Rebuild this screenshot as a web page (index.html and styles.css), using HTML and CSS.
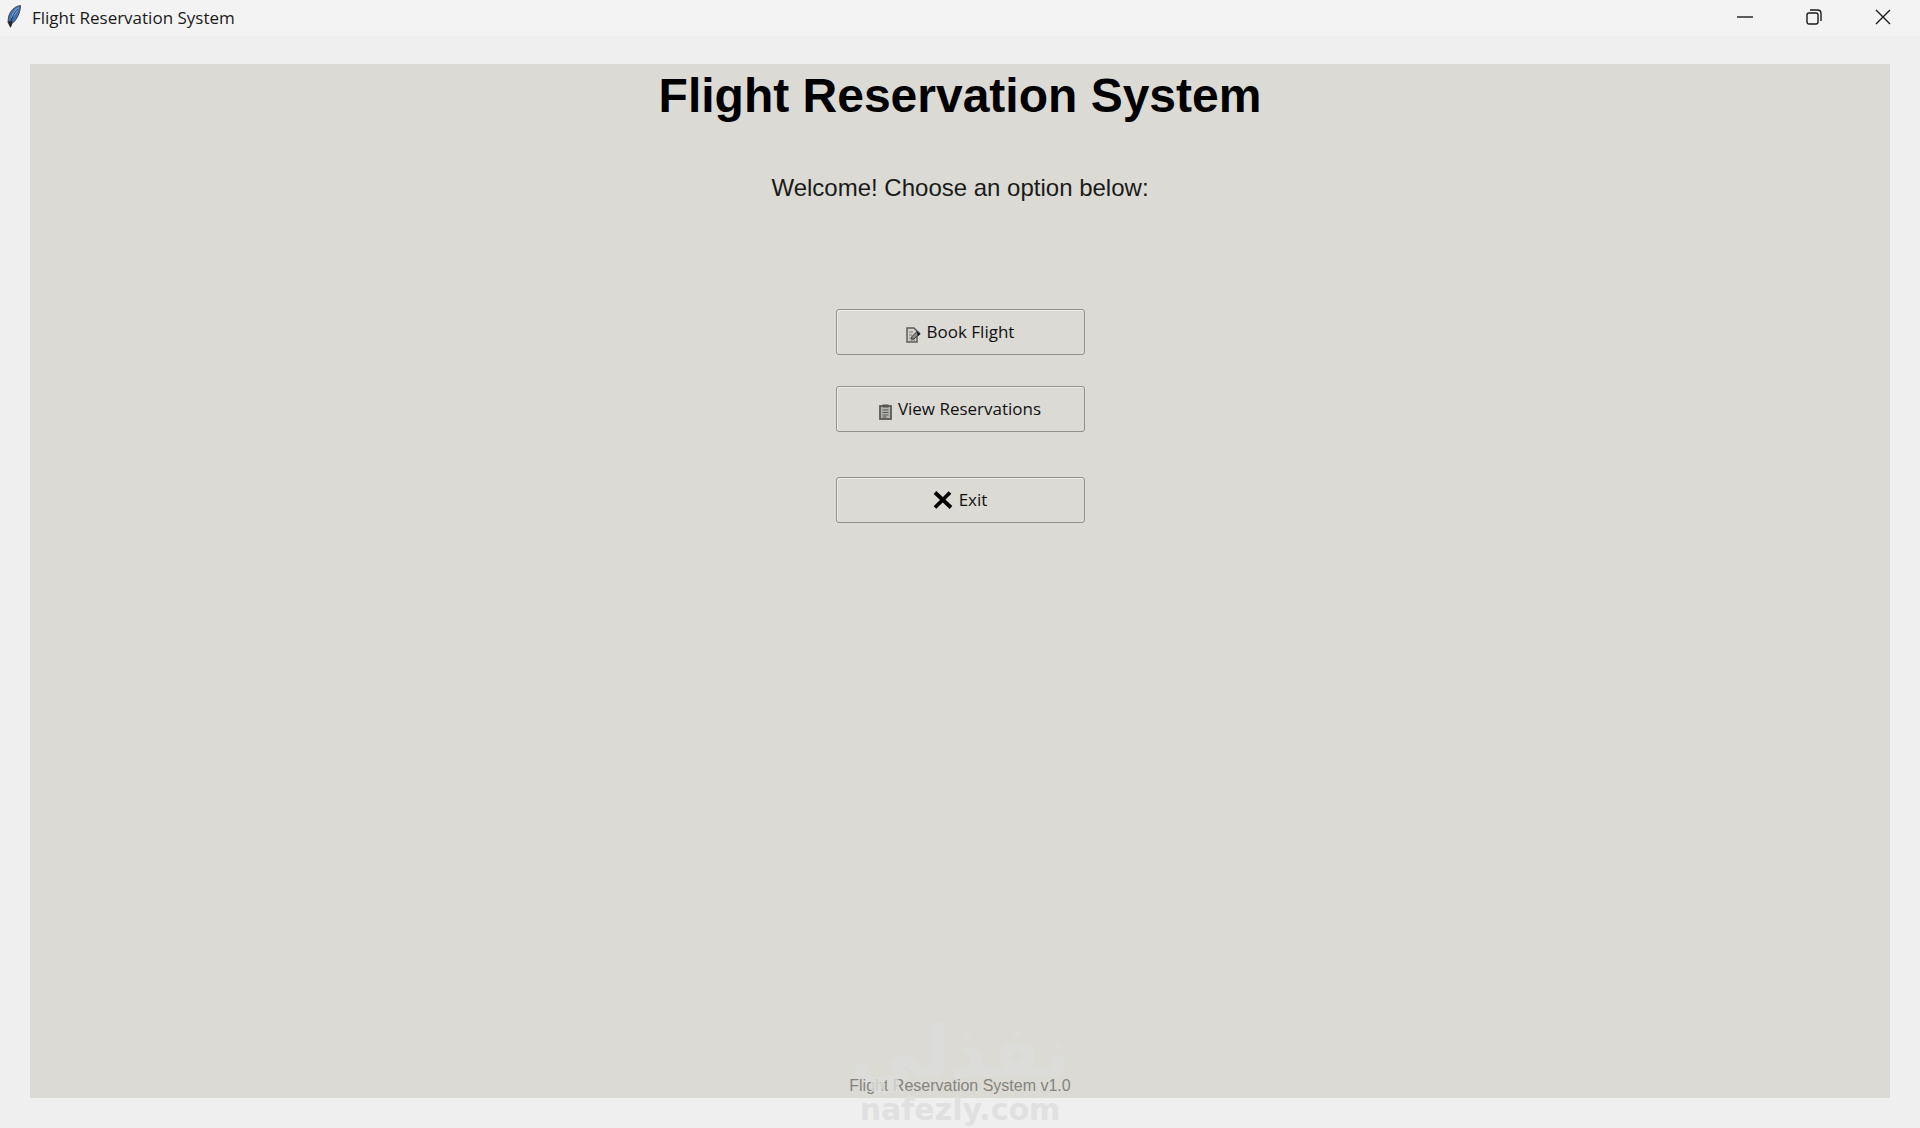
FILE: index.html
```html
<!DOCTYPE html>
<html lang="en">
<head>
  <meta charset="UTF-8" />
  <meta name="viewport" content="width=device-width, initial-scale=1.0"/>
  <title>Flight Reservation System</title>
  <link rel="stylesheet" href="styles.css">
</head>
<body>
  <header class="titlebar">
    <svg class="feather" width="18" height="26" viewBox="0 0 18 26" aria-hidden="true">
      <path d="M15.500 1.500C10 2 5 7 3.500 13L3 18.500L5.500 23L7 19.500C12 16 15.500 8 15.500 1.500Z" fill="#3f6fb5" stroke="#4c4a48" stroke-width="1"/>
      <path d="M14 3C10 5 7 9 6 14L8 13C11 10 13.500 6.500 14 3Z" fill="#78a4de"/>
      <path d="M13 5C9 9 6 14 5.500 23" fill="none" stroke="#1c2430" stroke-width="0.800"/>
      <path d="M3 17L5.500 24L7.500 17.500Z" fill="#252525"/>
    </svg>
    <span class="window-title">Flight Reservation System</span>
    <div class="window-controls">
      <button type="button" aria-label="Minimize">
        <svg width="16" height="16" viewBox="0 0 16 16"><path d="M0 8H16"/></svg>
      </button>
      <button type="button" aria-label="Restore">
        <svg width="16" height="16" viewBox="0 0 16 16"><rect x="1" y="4" width="11" height="11" rx="2"/><path d="M4 1H11.500Q15 1 15 4.500V12"/></svg>
      </button>
      <button type="button" aria-label="Close">
        <svg width="16" height="16" viewBox="0 0 16 16"><path d="M1 1L15 15M15 1L1 15"/></svg>
      </button>
    </div>
  </header>

  <main class="panel">
    <h1>Flight Reservation System</h1>
    <p class="welcome">Welcome! Choose an option below:</p>

    <div class="menu">
      <button type="button">
        <svg class="icon" width="15" height="16" viewBox="0 0 15 16" aria-hidden="true">
          <path d="M1 1H8L11 4V15H1Z" fill="#d2d1cd" stroke="#5c5c58" stroke-width="1.500"/>
          <path d="M3 5H7M3 8H6M3 11H5M4 13H9" stroke="#777" stroke-width="1"/>
          <path d="M5.500 12L6 9.500L11.500 4L14 6.500L8 12Z" fill="#8d8d89" stroke="#333" stroke-width="1"/>
          <path d="M10.500 4.500L14.500 7L12 9Z" fill="#111"/>
        </svg>
        Book Flight
      </button>
      <button type="button">
        <svg class="icon" width="13" height="16" viewBox="0 0 13 16" aria-hidden="true">
          <rect x="1" y="2" width="11" height="13" fill="#b5b4b0" stroke="#5a5a56" stroke-width="1.800"/>
          <rect x="3.500" y="0.500" width="6" height="3" fill="#555"/>
          <path d="M3.500 6H9.500M3.500 8.500H9.500M3.500 11H9.500M3.500 13H7.500" stroke="#555" stroke-width="1.200"/>
        </svg>
        View Reservations
      </button>
      <button type="button" class="exit">
        <svg class="cross" width="20" height="18" viewBox="0 0 20 18" aria-hidden="true">
          <path d="M2 1.500L18 16.500M17 1.500L2 16.500" stroke="#000" stroke-width="3.800"/>
        </svg>
        Exit
      </button>
    </div>

    <footer>Flight Reservation System v1.0</footer>
  </main>

  <div class="watermark" aria-hidden="true">
    <span class="watermark-ar" lang="ar" dir="rtl">نفذلي</span>
    <span class="watermark-en">nafezly.com</span>
  </div>
  <div class="watermark-dots" aria-hidden="true"><i></i><i></i></div>
</body>
</html>
```

FILE: styles.css
```css
* {
  box-sizing: border-box;
}

body {
  margin: 0;
  min-height: 100vh;
  display: flex;
  flex-direction: column;
  position: relative;
  background-color: #efefef;
  font-family: "Liberation Sans", Arial, sans-serif;
  color: #000;
}

.titlebar {
  display: flex;
  align-items: center;
  height: 36px;
  padding: 0 3px 0 5px;
  background-color: #f3f3f3;
  font-family: "Open Sans", "Segoe UI", sans-serif;
}

.feather {
  margin-bottom: 2px;
}

.window-title {
  margin-left: 9px;
  font-size: 17px;
  line-height: 24px;
  color: #1a1a1a;
}

.window-controls {
  display: flex;
  margin-left: auto;
}

.window-controls button {
  display: flex;
  align-items: center;
  justify-content: center;
  width: 69px;
  height: 34px;
  padding: 0 0 2px;
  border: none;
  background: none;
}

.window-controls svg {
  fill: none;
  stroke: #1a1a1a;
  stroke-width: 1.4;
}

.panel {
  flex: 1;
  display: flex;
  flex-direction: column;
  align-items: center;
  margin: 28px 30px 30px;
  background-color: #dbdad4;
}

h1 {
  margin: 4px 0 0;
  font-size: 48px;
  line-height: 56px;
}

.welcome {
  margin: 50px 0 0;
  font-size: 24px;
  line-height: 28px;
  color: #1a1a1a;
}

.menu {
  display: flex;
  flex-direction: column;
  gap: 31px;
  width: 249px;
  margin-top: 107px;
}

.menu button {
  display: flex;
  align-items: center;
  justify-content: center;
  gap: 6px;
  height: 46px;
  padding: 0;
  border: 1px solid #92918d;
  border-radius: 3px;
  background-color: #dcdad5;
  box-shadow: inset 1px 1px 0 #efeeea;
  font-family: "Open Sans", "Segoe UI", sans-serif;
  font-size: 17px;
  line-height: 24px;
  color: #111;
}

.menu .exit {
  margin-top: 14px;
}

.icon {
  margin-top: 6px;
}

footer {
  position: relative;
  z-index: 1;
  margin-top: auto;
  padding-bottom: 2px;
  font-size: 16px;
  line-height: 20px;
  color: #85847f;
}

/* faint site mark over the bottom edge */
.watermark {
  position: absolute;
  bottom: 0;
  left: 50%;
  display: flex;
  flex-direction: column;
  align-items: center;
  transform: translateX(-50%);
  font-family: "DejaVu Sans", sans-serif;
  font-weight: bold;
  pointer-events: none;
}

.watermark-ar {
  padding-bottom: 8px;
  font-size: 72px;
  line-height: 64px;
  color: #dcdcda;
}

.watermark-en {
  font-size: 30px;
  line-height: 36px;
  color: #e0e0e0;
}

.watermark-dots {
  position: absolute;
  bottom: 36px;
  left: 50%;
  z-index: 2;
  display: flex;
  gap: 4px;
  margin-left: -89px;
}

.watermark-dots i {
  width: 12px;
  height: 14px;
  border-radius: 4px;
  background-color: #dcdcda;
  opacity: 0.8;
}
```
